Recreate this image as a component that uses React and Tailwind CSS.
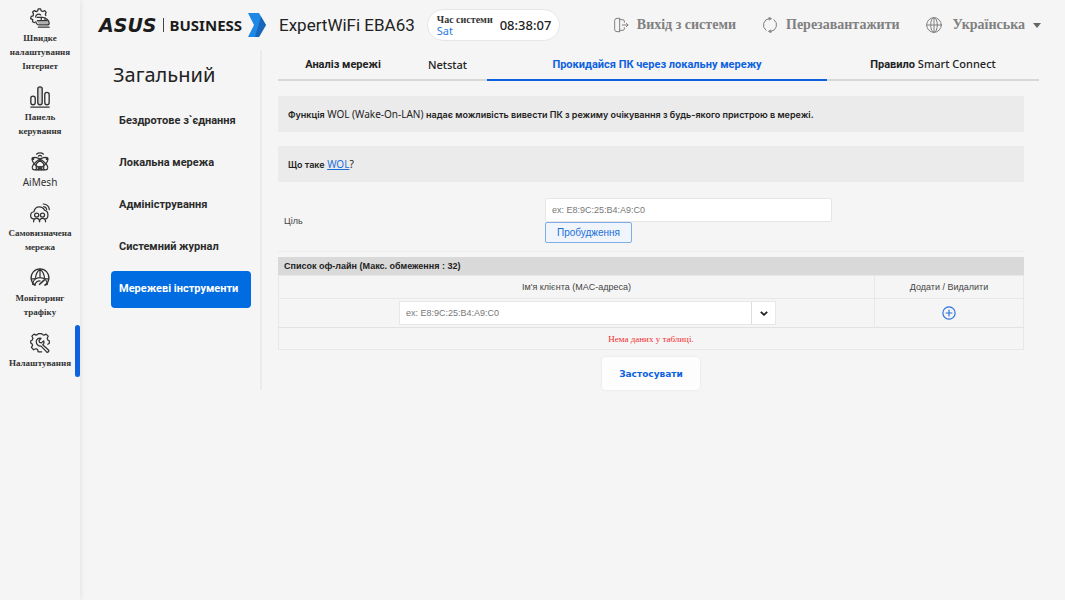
import { useState } from 'react'

const SERIF = 'font-["Liberation_Serif",serif]'
const SANS = 'font-["Liberation_Sans",sans-serif]'

function Icon({ children, className = 'size-5' }) {
  return (
    <svg viewBox="0 0 24 24" fill="none" stroke="currentColor" strokeWidth="1.5" strokeLinecap="round" strokeLinejoin="round" className={className} aria-hidden="true">
      {children}
    </svg>
  )
}

function SetupIcon() {
  return (
    <Icon className="h-5 w-[22px]">
      <path d="M5.500 17.500 3 16.500l.3-2.600-2.500-1.200.6-2.700 2.400-.6.3-2.400-1-2.200 2.200-1.700 2.100 1.200 1.800-.8.6-2.300h2.900l.9 2.300 1.900.7 2.200-1 1.700 2-1 2.200.6 1.600" />
      <path d="M6.800 10.800a3.600 3.600 0 0 1 6-2.500" />
      <path d="M8.500 11.200h6.500c4.800.4 8 4 8 7 0 1.600-1 2.100-2.500 2.100H11c-2 0-4-2-4-4" />
      <path d="M9 15.200h11.500M18 12.200v3M13.500 11.200v4M10 23h13" />
      <path d="M8 16h14l.5 3.500H11z" fill="currentColor" fillOpacity=".35" stroke="none" />
    </Icon>
  )
}

function DashboardIcon() {
  return (
    <Icon className="h-[22px] w-6">
      <rect x="2" y="11" width="4.800" height="9.500" rx="2.400" />
      <rect x="9.600" y="1" width="4.800" height="19.500" rx="2.400" fill="currentColor" fillOpacity=".15" />
      <rect x="17.200" y="7" width="4.800" height="13.500" rx="2.400" />
      <path d="M2 23h20" />
    </Icon>
  )
}

function AiMeshIcon() {
  return (
    <Icon>
      <ellipse cx="12" cy="14" rx="11" ry="4.800" transform="rotate(35 12 14)" />
      <ellipse cx="12" cy="14" rx="11" ry="4.800" transform="rotate(-35 12 14)" />
      <path d="M7.500 14 12 10l4.500 4v7.500h-9z" />
      <path d="M10.500 21.500V17.500h3v4M8 2.500c2-1.800 6-1.800 8 0M10 5c1.200-1 2.800-1 4 0" />
      <circle cx="3.500" cy="8" r="1" fill="currentColor" />
      <circle cx="20.500" cy="8" r="1" fill="currentColor" />
    </Icon>
  )
}

function NetworkIcon() {
  return (
    <Icon className="h-5 w-[22px]">
      <path d="M4.500 19C1.800 19 .8 17 .8 15c0-2.500 1.700-4.300 4-4.500C5.300 7 8 4.500 11.300 4.500c2.800 0 5 1.500 6 4 2.500.5 4.200 2.500 4.200 5.500 0 2.700-1 5-3 5" />
      <circle cx="8" cy="14.500" r="2.500" />
      <circle cx="15" cy="14.500" r="2.500" />
      <path d="M4.300 22.500c0-2.500 1.500-4 3.700-4s3.500 1.500 3.500 4c0-2.500 1.500-4 3.500-4s3.700 1.500 3.700 4" />
      <path d="M16 1.200c4 .2 6.800 3 7.200 6.800M16.500 4.300c2 .3 3.200 1.500 3.600 3.300" />
    </Icon>
  )
}

function TrafficIcon() {
  return (
    <Icon className="h-5 w-[22px]">
      <path d="M6 20.500A10.700 10.700 0 1 1 18 20.500" />
      <path d="M1.500 13h4.500M18 13h4.500M12 1.500c-3.500 2.500-5 6-5.500 11M12 1.500c3.500 2.500 5 6 5.500 11M12 1.500v9" />
      <path d="M3 19.500c.5-5 4.500-8 9-8s8.500 3 9 8l-3 1M3 19.500l3 1c.5-3 3-5 6-5" />
      <path d="M11.500 19.500 17 14.500" strokeWidth="2" />
    </Icon>
  )
}

function SettingsIcon() {
  return (
    <Icon className="h-5 w-[22px]">
      <path d="M14 22.500H9.800l-.8-2.800-2-.8-2.700 1.200-2.600-2.800 1.400-2.500-.8-2L.8 12V9.500l2-1.200.7-2-1.200-2.500 2.500-2.500 2.500 1.200 2-.8L10 .8h4l.8 1 2 .8 2.500-1.200 2.600 2.500-1.300 2.500.8 2 1.800 1.200v2.700l-1.800 1.200" />
      <path d="M7.500 10.500c0-3 2.800-5 5.800-4.200L10.800 9l.6 2.300 2.400.6 2.500-2.500c.9 2 .2 3.700-1 4.700l6.900 6.300c1.200 1.500-.8 3.500-2.300 2.300l-6.600-7c-3 .5-5.800-2-5.800-5.200z" />
    </Icon>
  )
}

const NAV = [
  { label: 'Швидке налаштування Інтернет', icon: SetupIcon },
  { label: 'Панель керування', icon: DashboardIcon },
  { label: 'AiMesh', icon: AiMeshIcon, latin: true },
  { label: 'Самовизначена мережа', icon: NetworkIcon },
  { label: 'Моніторинг трафіку', icon: TrafficIcon },
  { label: 'Налаштування', icon: SettingsIcon, active: true },
]

const MENU = ['Бездротове з`єднання', 'Локальна мережа', 'Адміністрування', 'Системний журнал', 'Мережеві інструменти']

const TABS = [
  { label: 'Аналіз мережі' },
  { label: 'Netstat', latin: true },
  { label: 'Прокидайся ПК через локальну мережу', active: true },
  { label: 'Правило', suffix: ' Smart Connect' },
]

function Sidebar() {
  return (
    <nav className="w-20 shrink-0 bg-[#f5f5f5] pt-2 shadow-[0_0_6px_rgba(0,0,0,0.1)]">
      <ul className="flex flex-col gap-[14px]">
        {NAV.map(({ label, icon: NavIcon, latin, active }) => (
          <li key={label} className="relative">
            <a href="#" className="flex flex-col items-center gap-[3px] px-1 text-center text-[#333]">
              <span className="flex h-5 items-center"><NavIcon /></span>
              <span className={latin ? 'font-["Noto_Sans",sans-serif] text-[10px] leading-[14px]' : `${SERIF} text-[9px] font-bold leading-[14px]`}>{label}</span>
            </a>
            {active && <span className="absolute -top-2 right-0 h-[52px] w-[5px] rounded-full bg-[#0d62e0]" />}
          </li>
        ))}
      </ul>
    </nav>
  )
}

function Header() {
  return (
    <header className="flex h-[50px] items-center pl-[19px] pr-6">
      <div className="flex w-[180px] items-center text-[#1c1c1c]">
        <span className='font-["DejaVu_Sans",sans-serif] text-[19px] font-bold italic leading-6'>ASUS</span>
        <span className="mx-[6px] h-[14px] w-px bg-[#444]" />
        <span className='font-["Noto_Sans",sans-serif] text-[15px] font-bold leading-6'>BUSINESS</span>
        <svg viewBox="0 0 18 24" className="ml-[6px] h-6 w-[18px]" aria-hidden="true">
          <path d="M0 0h11l7 12-7 12H0l6-12z" fill="#1e88e5" />
          <path d="m13 3.500 5 8.500-7 12H7z" fill="#1558a6" fillOpacity=".7" />
        </svg>
      </div>
      <h1 className="font-[Roboto,sans-serif] text-[17px] leading-6 text-[#222]">ExpertWiFi EBA63</h1>
      <div className="ml-[12px] flex h-8 items-center gap-[7px] rounded-full border border-[#e6e6e6] bg-white pl-[9px] pr-2">
        <div>
          <div className={`${SERIF} text-[10px] font-bold leading-[11px] text-[#333]`}>Час системи</div>
          <div className='font-["Noto_Sans",sans-serif] text-[11px] leading-3 text-[#2a7de1]'>Sat</div>
        </div>
        <time className='font-["Noto_Sans",sans-serif] text-[13px] font-medium leading-5 text-[#222]'>08:38:07</time>
      </div>
      <div className={`${SERIF} ml-auto flex items-center gap-[26px] text-[14px] font-bold leading-5 text-[#808080]`}>
        <button className="flex items-center gap-2">
          <Icon className="size-4">
            <path d="M10 2H6a3.500 3.500 0 0 0-3.500 3.500v13A3.500 3.500 0 0 0 6 22h4M10 2v20M10 4h5c1 0 2 1 2 2v2M10 20h5c1 0 2-1 2-2v-2M14 12h8.500M20 9.500l2.500 2.500-2.500 2.500" />
          </Icon>
          Вихід з системи
        </button>
        <button className="flex items-center gap-2">
          <Icon className="size-4">
            <path d="M11 2.200A10 10 0 0 0 6 20M13 21.800A10 10 0 0 0 18 4" />
            <path d="M11 .5 14.500 2.500 11 4.500zM13 19.500 9.500 21.500l3.500 2z" fill="currentColor" strokeWidth="1" />
          </Icon>
          Перезавантажити
        </button>
        <button className="flex items-center gap-[11px]">
          <Icon className="size-4">
            <circle cx="12" cy="12" r="11" />
            <ellipse cx="12" cy="12" rx="5" ry="11" />
            <path d="M12 1v22M1 12h22" />
          </Icon>
          <span className="flex items-center gap-2">
            Українська
            <svg viewBox="0 0 8 5" className="h-[5px] w-2" aria-hidden="true"><path d="M0 0h8L4 5z" fill="#666" /></svg>
          </span>
        </button>
      </div>
    </header>
  )
}

function WakeOnLan() {
  const [target, setTarget] = useState('')
  const [client, setClient] = useState('')

  return (
    <form className={`${SANS} pr-[15px] pt-[15px] text-[9px] leading-3 text-[#444]`} onSubmit={e => e.preventDefault()}>
      <div className='flex flex-col gap-[14px] font-["Noto_Sans",sans-serif] text-[10px] text-[#222]'>
        <p className="h-9 bg-[#ebebeb] px-[10px] py-3">
          <span className="font-[Inter,sans-serif] text-[9px] font-semibold">Функція</span> WOL (Wake-On-LAN) <span className="font-[Inter,sans-serif] text-[9px] font-semibold">надає можливість вивести ПК з режиму очікування з будь-якого пристрою в мережі.</span>
        </p>
        <p className="h-9 bg-[#ebebeb] px-[10px] py-3">
          <span className="font-[Inter,sans-serif] text-[9px] font-semibold">Що таке</span> <a href="#" className="text-[#1a6fdc] underline">WOL</a>?
        </p>
      </div>

      <div className="mb-[5px] flex items-center border-b border-[#ececec] pb-2 pt-4">
        <label htmlFor="target" className="w-[267px] shrink-0 pl-[6px]">Ціль</label>
        <div className="flex flex-1 flex-col items-start">
          <input id="target" value={target} onChange={e => setTarget(e.target.value)} placeholder="ex: E8:9C:25:B4:A9:C0"
            className="h-6 w-3/5 rounded-xs border border-[#e6e6e6] bg-white px-[6px] placeholder:text-[#777]" />
          <button className="h-[21px] rounded-xs border border-[#7fade8] bg-[#f0f5fb] px-[11px] text-[10px] text-[#1a6fdc]">Пробудження</button>
        </div>
      </div>

      <table className="w-full border-collapse border border-[#e8e8e8]">
        <caption className="bg-[#d9d9d9] px-[6px] py-[3px] text-left font-bold text-[#222]">Список оф-лайн (Макс. обмеження : 32)</caption>
        <thead>
          <tr className="h-[23px] border-b border-[#e8e8e8]">
            <th className="w-4/5 border-r border-[#e8e8e8] font-normal">Ім'я клієнта (MAC-адреса)</th>
            <th className="font-normal">Додати / Видалити</th>
          </tr>
        </thead>
        <tbody>
          <tr className="h-[29px] border-b border-[#e2e2e2]">
            <td className="border-r border-[#e8e8e8] pl-[22px]">
              <div className="mx-auto flex h-6 w-[377px] border border-[#e8e8e8] bg-white">
                <input aria-label="Ім'я клієнта" value={client} onChange={e => setClient(e.target.value)} placeholder="ex: E8:9C:25:B4:A9:C0"
                  className="min-w-0 flex-1 px-[6px] placeholder:text-[#777]" />
                <button type="button" aria-label="Список клієнтів" className="flex w-6 items-center justify-center border-l border-[#ddd] text-[#222]">
                  <svg viewBox="0 0 8 5" className="h-[5px] w-2" fill="none" stroke="currentColor" strokeWidth="1.800"><path d="m.8.8 3.200 3 3.200-3" /></svg>
                </button>
              </div>
            </td>
            <td>
              <button type="button" aria-label="Додати" className="mx-auto block text-[#2a73dd]">
                <Icon className="size-[14px]">
                  <circle cx="12" cy="12" r="10.500" strokeWidth="2" />
                  <path d="M12 7v10M7 12h10" strokeWidth="2" />
                </Icon>
              </button>
            </td>
          </tr>
          <tr className="h-[22px]">
            <td colSpan={2} className={`${SERIF} text-center text-[#f03030]`}>Нема даних у таблиці.</td>
          </tr>
        </tbody>
      </table>

      <button className='mx-auto mt-[7px] block h-[33px] rounded bg-[#fdfdfd] px-[17px] font-["DejaVu_Sans",sans-serif] text-[9px] font-bold text-[#0d62e0] shadow-[0_0_3px_rgba(0,0,0,0.08)]'>Застосувати</button>
    </form>
  )
}

export default function App() {
  const [page, setPage] = useState(4)

  return (
    <div className={`${SANS} flex min-h-screen bg-[#f5f5f5]`}>
      <Sidebar />
      <div className="min-w-0 flex-1">
        <Header />
        <div className="flex">
          <aside className="w-[182px] shrink-0 border-r-2 border-[#ebebeb] pl-[31px] pr-[9px]">
            <h2 className='px-[2px] pt-[11px] font-["Noto_Sans",sans-serif] text-[20px] leading-7 text-[#222]'>Загальний</h2>
            <ul className="mt-[14px] flex flex-col gap-[5px]">
              {MENU.map((label, i) => (
                <li key={label}>
                  <button onClick={() => setPage(i)}
                    className={`h-[37px] w-full whitespace-nowrap rounded px-2 text-left font-[Roboto,sans-serif] text-[11px] font-bold ${i === page ? 'bg-[#006ce1] text-white' : 'text-[#2b2b2b]'}`}>
                    {label}
                  </button>
                </li>
              ))}
            </ul>
          </aside>
          <main className="min-w-0 flex-1 pl-4 pr-[26px]">
            <div className="grid grid-cols-[130fr_79fr_340fr_212fr] font-[Roboto,sans-serif] text-[11px] font-bold leading-7 text-[#222]">
              {TABS.map(t => (
                <button key={t.label}
                  className={`border-b-2 ${t.active ? 'border-[#0d5fdc] text-[#0d62e0]' : 'border-[#d8d8d8]'} ${t.latin ? 'font-["Noto_Sans",sans-serif] font-medium' : ''}`}>
                  {t.label}
                  {t.suffix && <span className='font-["Noto_Sans",sans-serif] font-medium'>{t.suffix}</span>}
                </button>
              ))}
            </div>
            <WakeOnLan />
          </main>
        </div>
      </div>
    </div>
  )
}
